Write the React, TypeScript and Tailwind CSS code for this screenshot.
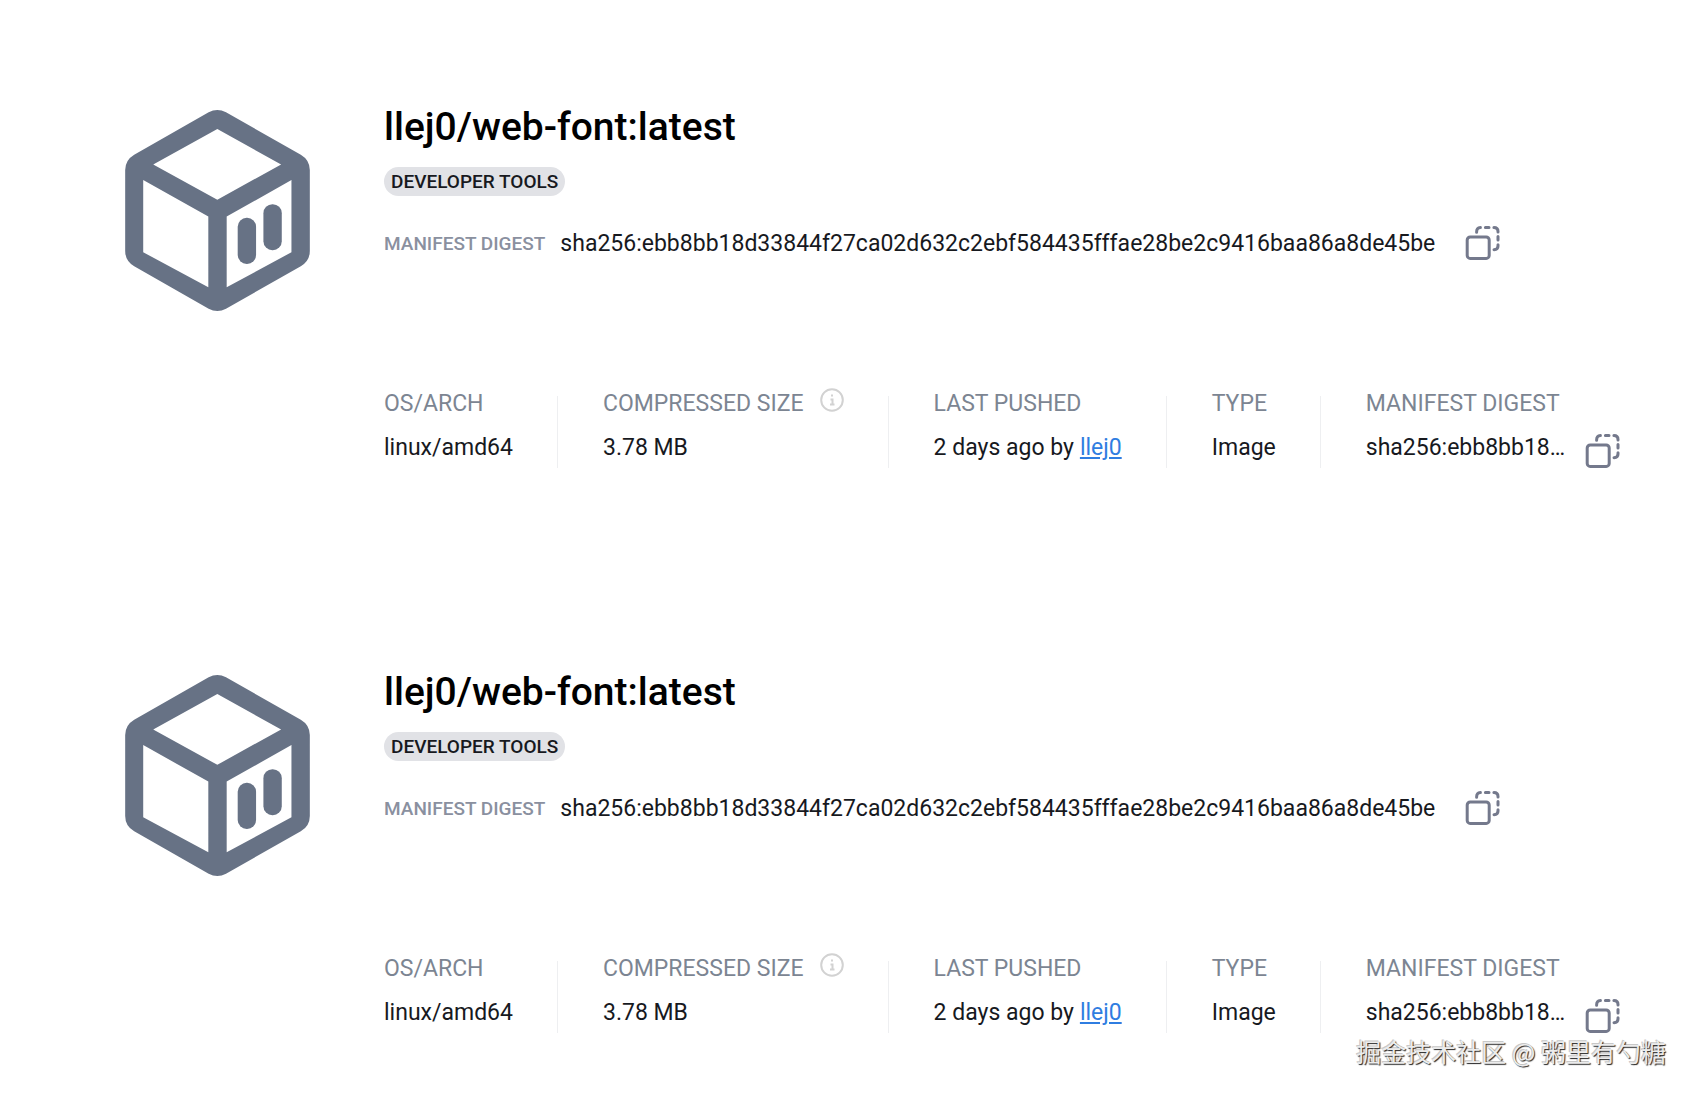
const images = [
  {
    id: 'first',
    name: 'llej0/web-font:latest',
    category: 'DEVELOPER TOOLS',
    digest: 'sha256:ebb8bb18d33844f27ca02d632c2ebf584435fffae28be2c9416baa86a8de45be',
    shortDigest: 'sha256:ebb8bb18…',
    arch: 'linux/amd64',
    size: '3.78 MB',
    pushed: '2 days ago by',
    user: 'llej0',
    type: 'Image',
  },
  {
    id: 'second',
    name: 'llej0/web-font:latest',
    category: 'DEVELOPER TOOLS',
    digest: 'sha256:ebb8bb18d33844f27ca02d632c2ebf584435fffae28be2c9416baa86a8de45be',
    shortDigest: 'sha256:ebb8bb18…',
    arch: 'linux/amd64',
    size: '3.78 MB',
    pushed: '2 days ago by',
    user: 'llej0',
    type: 'Image',
  },
]

function CubeLogo() {
  return (
    <svg viewBox="76 60 553 602" className="h-[201px] w-[185px] shrink-0" aria-hidden="true">
      <path
        fill="#677285"
        fillRule="evenodd"
        d="M326 67Q352 53 378 67L602 194Q629 210 629 240V482Q629 512 602 528L378 655Q352 669 326 655L103 528Q76 512 76 482V240Q76 210 103 194ZM160 223L352 329L543 223L352 117ZM130 270V486L325 591V379ZM574 270L380 379V591L574 486Z"
      />
      <rect x="413" y="383" width="55" height="138" rx="27" fill="#677285" />
      <rect x="490" y="342" width="55" height="138" rx="27" fill="#677285" />
    </svg>
  )
}

function CopyButton() {
  return (
    <button type="button" aria-label="Copy digest" className="shrink-0">
      <svg viewBox="0 0 36 36" className="block size-9" fill="none" stroke="#74798c" strokeWidth="3" strokeLinecap="round">
        <rect x="2.2" y="12" width="22" height="21.4" rx="3" />
        <path d="M11.6 7.2Q11.6 2.8 15.4 2.6M20.4 2.6H24M28.9 2.6Q33 2.6 33 6.6V7M33 11.6V15M33 19.8V21Q33 24.6 29 24.8" />
      </svg>
    </button>
  )
}

function InfoIcon() {
  return (
    <svg viewBox="0 0 24 24" className="mb-2 size-6" fill="none" stroke="#d2d2d2" strokeWidth="2" aria-hidden="true">
      <circle cx="12" cy="12" r="10.8" />
      <path d="M10.5 11.5H12.5V16.5M10 16.5H14.5M12 6.5V8.5" />
    </svg>
  )
}

function Stat({ label, info, children }: { label: string; info?: boolean; children: React.ReactNode }) {
  return (
    <div className="h-[72px] border-l border-[#eeeff1] pr-11 pl-[45px] first:border-l-0 first:pl-0 last:pr-0">
      <dt className="-mt-1.5 flex h-7 items-center gap-4 text-[23px] text-[#7c8592]">
        {label}
        {info && <InfoIcon />}
      </dt>
      <dd className="mt-3 flex h-9 items-center text-[23px] text-[#17191e]">{children}</dd>
    </div>
  )
}

export default function App() {
  return (
    <main className="relative bg-white font-['Roboto',sans-serif] whitespace-nowrap">
      {images.map((image) => (
        <article key={image.id} className="flex items-start gap-[74px] pt-[110px] pb-[97px] pl-[125px] last-of-type:pb-[61px]">
          <CubeLogo />
          <div className="min-w-0 flex-1">
            <h2 className="-mt-[7px] text-[39px] leading-12 font-medium text-black">{image.name}</h2>
            <span className="mt-4 inline-flex h-[29px] items-center rounded-full bg-[#e1e2e6] px-[7px] pt-0.5 text-[19px] font-medium text-[#17191e]">
              {image.category}
            </span>
            <div className="mt-[30px] flex h-9 items-center">
              <span className="text-[19px] font-medium text-[#8a909f]">MANIFEST DIGEST</span>
              <span className="mr-[30px] ml-[15px] text-[23px] text-[#17191e]">{image.digest}</span>
              <div className="mt-1">
                <CopyButton />
              </div>
            </div>
            <dl className="mt-[134px] flex">
              <Stat label="OS/ARCH">{image.arch}</Stat>
              <Stat label="COMPRESSED SIZE" info>
                {image.size}
              </Stat>
              <Stat label="LAST PUSHED">
                {image.pushed}
                <a href="#" className="ml-[6px] text-[#2f7de1] underline">
                  {image.user}
                </a>
              </Stat>
              <Stat label="TYPE">{image.type}</Stat>
              <Stat label="MANIFEST DIGEST">
                <span className="mr-5">{image.shortDigest}</span>
                <div className="mt-4">
                  <CopyButton />
                </div>
              </Stat>
            </dl>
          </div>
        </article>
      ))}
      <p className="absolute right-7 bottom-[25px] font-['Noto_Sans_CJK_SC',sans-serif] text-[25px] leading-9 text-[#ececec] [text-shadow:1px_1px_1px_#222,-1px_-1px_0_#c8c8c8]">
        掘金技术社区 @ 粥里有勺糖
      </p>
    </main>
  )
}
